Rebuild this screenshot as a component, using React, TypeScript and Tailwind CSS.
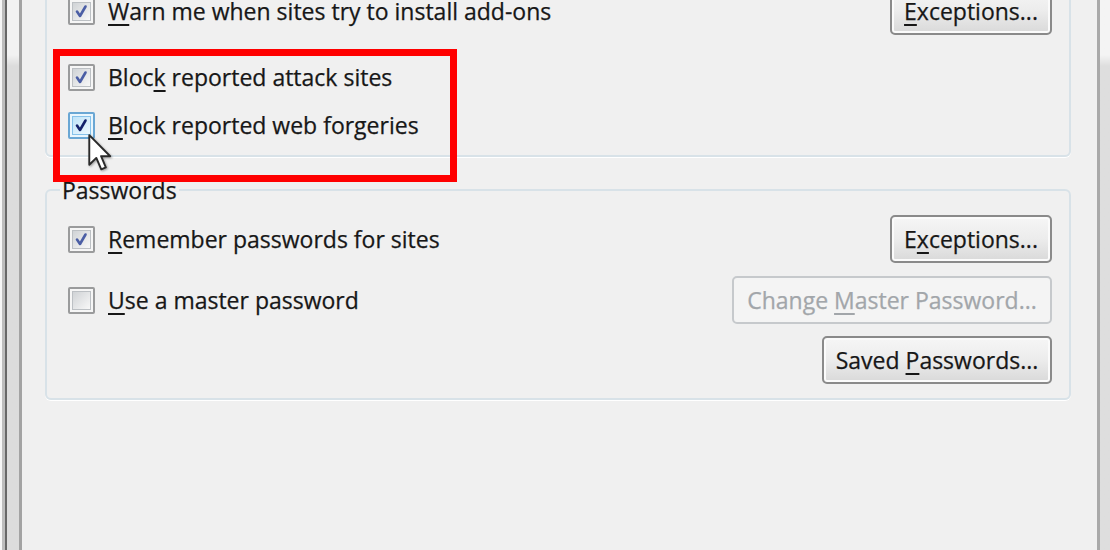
import type { ReactNode } from 'react';

function Check({ hover = false, checked = true }: { hover?: boolean; checked?: boolean }) {
  return (
    <div
      className={
        hover
          ? 'h-[27px] w-[27px] shrink-0 rounded-[2px] border-2 border-[#6aa7d4] bg-[#eaf6fd] p-[2px]'
          : 'h-[27px] w-[27px] shrink-0 rounded-[2px] border-2 border-[#9a9b9c] bg-[#f6f6f6] p-[2px]'
      }
    >
      <div
        className={
          hover
            ? 'relative h-full w-full border border-[#86c2ea] bg-gradient-to-br from-[#bfe3f8] to-[#eef9fe]'
            : 'relative h-full w-full border border-[#bcc0c4] bg-gradient-to-br from-[#d0d3d6] to-[#f8f8f8]'
        }
      >
        {checked && (
          <svg viewBox="0 0 19 19" className="absolute -left-px -top-px h-[19px] w-[19px]">
            <path
              d="M5 9.5 L8 14 L13.5 4.5"
              fill="none"
              stroke={hover ? '#15226b' : '#4b5ea5'}
              strokeWidth="2.6"
              strokeLinecap="round"
              strokeLinejoin="round"
            />
          </svg>
        )}
      </div>
    </div>
  );
}

function Button({ children, width, disabled = false }: { children: ReactNode; width: string; disabled?: boolean }) {
  return (
    <div
      className={
        disabled
          ? `ml-auto flex h-[48px] ${width} shrink-0 items-center justify-center rounded-[5px] border-2 border-[#c6c9cc] bg-[#f4f4f4] text-[#a2a6aa]`
          : `ml-auto flex h-[48px] ${width} shrink-0 items-center justify-center rounded-[5px] border-2 border-[#8a8a8a] bg-gradient-to-b from-[#f6f6f6] via-[#ececec] to-[#d9d9d9] shadow-[inset_0_0_0_2px_#fbfbfb]`
      }
    >
      <span className="leading-[22px]">{children}</span>
    </div>
  );
}

function Row({ children, className = '' }: { children: ReactNode; className?: string }) {
  return <div className={`flex h-[48px] items-center ${className}`}>{children}</div>;
}

function Label({ children }: { children: ReactNode }) {
  return <span className="ml-[13px] whitespace-nowrap leading-[22px]">{children}</span>;
}

const u = 'underline decoration-2 underline-offset-[4px]';

export default function App() {
  return (
    <div className="flex h-[550px] w-[1110px] overflow-hidden bg-[#f0f0f0] font-['Open_Sans','Noto_Sans',sans-serif] text-[23px] leading-[30px] text-[#171717] [-webkit-text-stroke:0.25px_currentColor]">
      {/* window frame, left */}
      <div className="flex h-full shrink-0">
        <div className="w-[2px] bg-[#f6f6f6]" />
        <div className="w-[3px] bg-[#bdbdbd]" />
        <div className="w-[2px] bg-[#676767]" />
        <div className="w-[12px] bg-gradient-to-b from-[#f2f2f2] from-[10%] to-[#dcdcdc] to-[12%]" />
        <div className="w-[3px] bg-[#a3a3a3]" />
      </div>

      <div className="relative flex-1 pl-[23px] pr-[26px]">
        {/* upper group */}
        <div className="mt-[-36px] h-[193px] rounded-[6px] border-2 border-[#d8e2e8] pl-[21px] pr-[17px] pt-[21px] shadow-[0_1px_0_#ffffff]">
          <Row>
            <Check />
            <Label>
              <span className={u}>W</span>arn me when sites try to install add-ons
            </Label>
            <Button width="w-[162px]">
              <span className={u}>E</span>xceptions...
            </Button>
          </Row>
          <Row className="mt-[18px]">
            <Check />
            <Label>
              Bloc<span className={u}>k</span> reported attack sites
            </Label>
          </Row>
          <Row>
            <Check hover />
            <Label>
              <span className={u}>B</span>lock reported web forgeries
            </Label>
          </Row>
        </div>

        {/* passwords group */}
        <fieldset className="mt-[18px] rounded-[6px] border-2 border-[#d8e2e8] pb-[14px] shadow-[0_1px_0_#ffffff]">
          <legend className="ml-[13px] px-[2px] leading-[30px]">Passwords</legend>
          <div className="pl-[21px] pr-[17px] pt-[10px]">
            <Row>
              <Check />
              <Label>
                <span className={u}>R</span>emember passwords for sites
              </Label>
              <Button width="w-[162px]">
                E<span className={u}>x</span>ceptions...
              </Button>
            </Row>
            <Row className="mt-[13px]">
              <Check checked={false} />
              <Label>
                <span className={u}>U</span>se a master password
              </Label>
              <Button width="w-[320px]" disabled>
                Change <span className={u}>M</span>aster Password...
              </Button>
            </Row>
            <Row className="mt-[12px]">
              <Button width="w-[230px]">
                Saved <span className={u}>P</span>asswords...
              </Button>
            </Row>
          </div>
        </fieldset>

        {/* annotation */}
        <div className="pointer-events-none absolute left-[31px] top-[49px] h-[133px] w-[404px] border-[7px] border-[#ff0000]" />

        {/* mouse pointer */}
        <svg viewBox="0 0 13 20" className="absolute left-[66px] top-[134px] h-[38px] w-[25px] drop-shadow-[1px_1px_1px_rgba(0,0,0,0.35)]">
          <path
            d="M0.6 0.6 L0.6 16.2 L4.3 12.6 L6.9 18.6 L9.3 17.6 L6.8 11.7 L11.6 11.7 Z"
            fill="#ffffff"
            stroke="#2a2a2a"
            strokeWidth="1"
            strokeLinejoin="round"
          />
        </svg>
      </div>

      {/* window frame, right */}
      <div className="flex h-full shrink-0">
        <div className="w-[3px] bg-[#a9a9a9]" />
        <div className="w-[10px] bg-gradient-to-b from-[#f4f4f4] from-[10%] to-[#dedede] to-[12%]" />
      </div>
    </div>
  );
}
